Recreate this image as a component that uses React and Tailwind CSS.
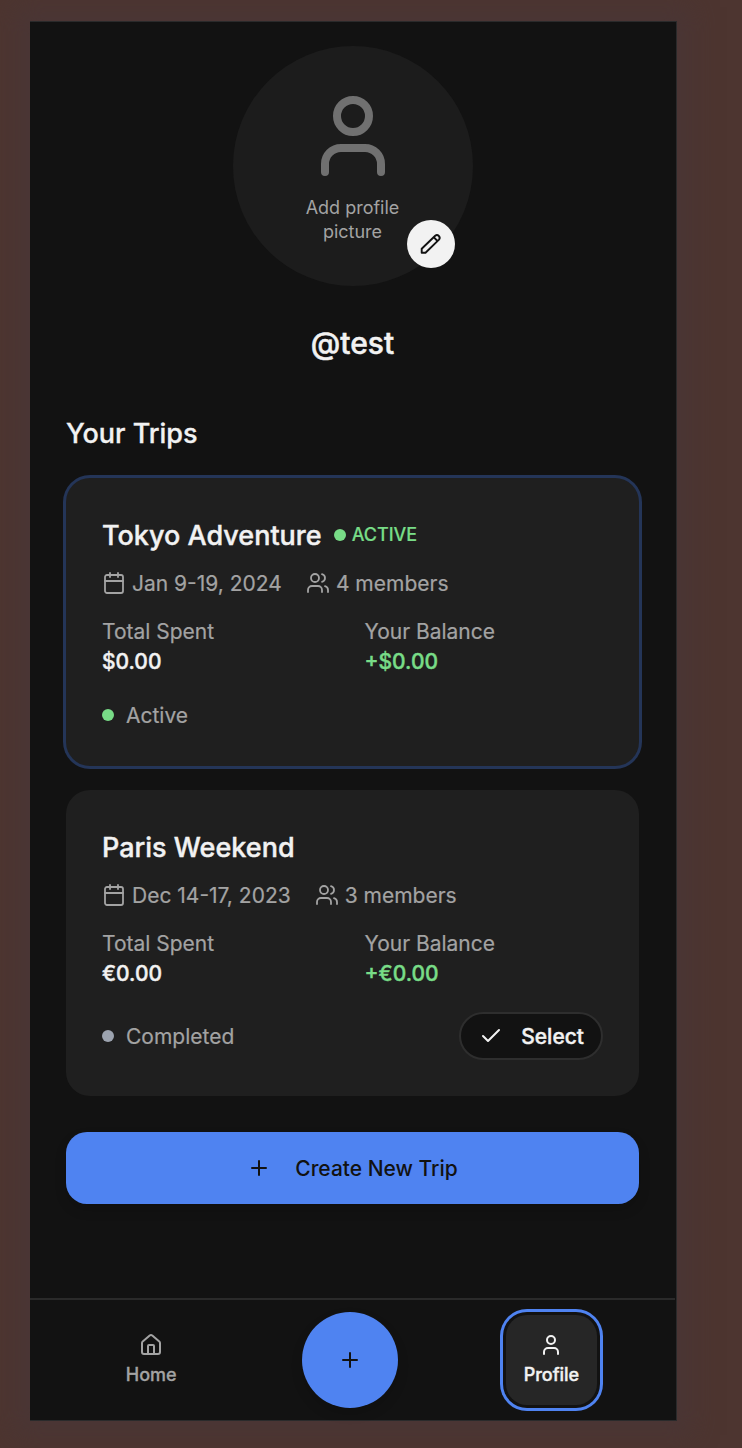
import { Calendar, Users, User, Check, Plus, House } from "lucide-react";

const trips = [
  {
    name: "Tokyo Adventure",
    dates: "Jan 9-19, 2024",
    members: "4 members",
    spent: "$0.00",
    balance: "+$0.00",
    status: "Active",
    active: true,
  },
  {
    name: "Paris Weekend",
    dates: "Dec 14-17, 2023",
    members: "3 members",
    spent: "€0.00",
    balance: "+€0.00",
    status: "Completed",
    active: false,
  },
];

function PencilIcon() {
  return (
    <svg width="24" height="24" viewBox="0 0 24 24" fill="none" stroke="currentColor" strokeWidth="1.9" strokeLinejoin="round">
      <path d="M2.7 20.7v-3.9L16.2 3.8a2.7 2.7 0 0 1 3.8 3.8L6.5 20.7Z" />
      <path d="m14.7 5.2 3.8 3.8" />
    </svg>
  );
}

function Avatar() {
  return (
    <div className="relative flex size-60 flex-col items-center justify-center gap-3 rounded-full bg-[#1c1c1c]">
      <User size={96} strokeWidth={2} className="text-[#707070]" />
      <p className="w-30 text-center text-[18px] leading-6 text-[#a3a3a3]">Add profile picture</p>
      <button className="absolute right-[18px] bottom-[18px] flex size-12 items-center justify-center rounded-full bg-[#f2f2f2] text-[#121212]">
        <PencilIcon />
      </button>
    </div>
  );
}

function TripCard({ trip }) {
  return (
    <article
      className={
        trip.active
          ? "rounded-[24px] bg-[#1f1f1f] p-9 ring-3 ring-[#243558]"
          : "rounded-[24px] bg-[#1f1f1f] p-9"
      }
    >
      <div className="flex h-[42px] items-center gap-3">
        <h3 className="pt-0.5 text-[27px] font-medium text-[#f2f2f2] [-webkit-text-stroke:0.4px]">{trip.name}</h3>
        {trip.active && (
          <span className="flex items-center gap-1.5 text-[18px] leading-6 font-medium text-[#78dc87] [-webkit-text-stroke:0.2px]">
            <span className="size-3 rounded-full bg-[#78dc87]" />
            <span className="pb-px">ACTIVE</span>
          </span>
        )}
      </div>
      <div className="mt-3 flex h-[30px] items-center gap-6 text-[21px] leading-7 text-[#a3a3a3]">
        <span className="flex items-center gap-1.5">
          <Calendar size={24} strokeWidth={1.8} />
          <span className="pt-0.5 [-webkit-text-stroke:0.2px]">{trip.dates}</span>
        </span>
        <span className="flex items-center gap-1.5">
          <Users size={24} strokeWidth={1.8} />
          <span className="pt-0.5 [-webkit-text-stroke:0.2px]">{trip.members}</span>
        </span>
      </div>
      <div className="mt-[19px] mb-[23px] grid grid-cols-2 gap-6 text-[21px] leading-[30px]">
        <div>
          <p className="text-[#a3a3a3] [-webkit-text-stroke:0.2px]">Total Spent</p>
          <p className="font-medium text-[#f2f2f2] [-webkit-text-stroke:0.4px]">{trip.spent}</p>
        </div>
        <div>
          <p className="text-[#a3a3a3] [-webkit-text-stroke:0.2px]">Your Balance</p>
          <p className="font-medium text-[#78dc87] [-webkit-text-stroke:0.4px]">{trip.balance}</p>
        </div>
      </div>
      <div className="flex items-center justify-between text-[21px] leading-7">
        <span className="flex items-center gap-3 text-[#a3a3a3]">
          <span className={trip.active ? "size-3 rounded-full bg-[#78dc87]" : "size-3 rounded-full bg-[#9ca3af]"} />
          <span className="pt-0.5 [-webkit-text-stroke:0.2px]">{trip.status}</span>
        </span>
        {!trip.active && (
          <button className="flex h-12 items-center gap-[18px] rounded-full border-2 border-[#2e2e2e] bg-[#121212] pr-[17px] pl-[18px] font-medium text-[#f2f2f2]">
            <Check size={24} strokeWidth={2} />
            <span className="pt-0.5 [-webkit-text-stroke:0.4px]">Select</span>
          </button>
        )}
      </div>
    </article>
  );
}

export default function App() {
  return (
    <div className="h-[1448px] overflow-hidden bg-[#4d3530] pt-[21px] pl-[30px] font-['Inter',sans-serif]">
      <div className="flex h-[1400px] w-[647px] flex-col border-y border-r border-[#2a2a2b] bg-[#121212] shadow-[0_0_24px_14px_rgba(72,54,56,0.7)]">
        <main className="flex w-[645px] flex-1 flex-col px-9 pt-6">
          <div className="flex justify-center">
            <Avatar />
          </div>
          <h1 className="mt-9 text-center text-[30px] leading-[42px] font-medium text-[#f2f2f2] [-webkit-text-stroke:0.5px]">@test</h1>
          <h2 className="mt-[49px] text-[27px] leading-[42px] font-medium text-[#f2f2f2] [-webkit-text-stroke:0.3px]">Your Trips</h2>
          <div className="mt-[23px] flex flex-col gap-6">
            {trips.map((t) => (
              <TripCard key={t.name} trip={t} />
            ))}
          </div>
          <button className="mt-9 flex h-18 items-center justify-center gap-6 rounded-[21px] bg-[#4f83f1] text-[21px] font-medium text-[#121212] shadow-[0_6px_12px_rgba(0,0,0,0.15)]">
            <Plus size={24} strokeWidth={2} />
            <span className="pt-0.5">Create New Trip</span>
          </button>
        </main>
        <nav className="flex h-[122px] w-[645px] items-center justify-around border-t-2 border-[#2a2a2a] px-6 text-[18px] leading-6 font-medium">
          <a className="flex flex-col items-center gap-1.5 px-[18px] text-[#a3a3a3] [-webkit-text-stroke:0.3px]">
            <House size={24} strokeWidth={2} />
            Home
          </a>
          <button className="flex size-24 items-center justify-center rounded-full bg-[#4f83f1] text-[#121212] shadow-[0_6px_12px_rgba(0,0,0,0.15)]">
            <Plus size={24} strokeWidth={2} />
          </button>
          <a className="flex h-[90px] flex-col items-center justify-center gap-1.5 rounded-[21px] bg-[#262626] px-[18px] text-[#f2f2f2] ring-3 ring-[#4f83f1] ring-offset-3 ring-offset-[#121212] [-webkit-text-stroke:0.4px]">
            <User size={24} strokeWidth={2} />
            Profile
          </a>
        </nav>
      </div>
    </div>
  );
}
